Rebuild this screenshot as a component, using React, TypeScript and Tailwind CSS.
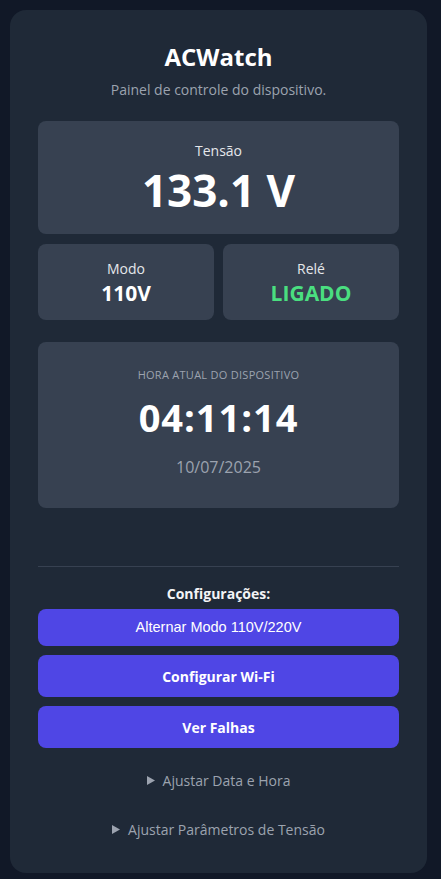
import React from 'react';

const Caret = () => (
  <svg width="8" height="9" viewBox="0 0 8 9" className="shrink-0">
    <path d="M0 0 L8 4.5 L0 9 Z" fill="#9ca3af" />
  </svg>
);

const App = () => {
  return (
    <div className="min-h-screen bg-[#111827] pt-[10px] pb-[6px] pl-[10px]" style={{ fontFamily: '"Open Sans", "Noto Sans", sans-serif' }}>
      <div className="w-[417px] h-[863px] rounded-2xl bg-[#1f2937] px-[28px] pt-[31px] flex flex-col">
        {/* Header */}
        <h1 className="text-center text-[24px] leading-[32px] font-bold text-white">ACWatch</h1>
        <p className="mt-[7px] text-center text-[14px] leading-[20px] text-[#9ca3af]">Painel de controle do dispositivo.</p>

        {/* Tensão */}
        <div className="mt-[21px] h-[113px] rounded-lg bg-[#374151] flex flex-col items-center pt-[20px]">
          <span className="text-[14px] leading-[20px] text-[#e5e7eb]">Tensão</span>
          <span className="mt-[5px] text-[44px] leading-[48px] font-bold text-white">133.1 V</span>
        </div>

        {/* Modo / Relé */}
        <div className="mt-[10px] grid grid-cols-2 gap-[9px]">
          <div className="h-[76px] rounded-lg bg-[#374151] flex flex-col items-center pt-[15px]">
            <span className="text-[14px] leading-[20px] text-[#e5e7eb]">Modo</span>
            <span className="text-[21px] leading-[28px] font-bold text-white">110V</span>
          </div>
          <div className="h-[76px] rounded-lg bg-[#374151] flex flex-col items-center pt-[15px]">
            <span className="text-[14px] leading-[20px] text-[#e5e7eb]">Relé</span>
            <span className="text-[21px] leading-[28px] font-bold text-[#4ade80]">LIGADO</span>
          </div>
        </div>

        {/* Hora */}
        <div className="mt-[22px] h-[166px] rounded-lg bg-[#374151] flex flex-col items-center pt-[25px]">
          <span className="text-[11px] leading-[16px] uppercase tracking-wide text-[#9ca3af]">Hora atual do dispositivo</span>
          <span className="mt-[12px] text-[38px] leading-[44px] font-bold tracking-wide text-white">04:11:14</span>
          <span className="mt-[16px] text-[16px] leading-[24px] text-[#9ca3af]">10/07/2025</span>
        </div>

        <div className="mt-[58px] border-t border-[#374151]" />

        {/* Configurações */}
        <p className="mt-[17px] text-center text-[14px] leading-[20px] font-bold text-[#f3f4f6]">Configurações:</p>
        <div className="mt-[5px] flex flex-col gap-[9px]">
          <button className="h-[37px] rounded-lg bg-[#4f46e5] text-white text-[14.5px]" style={{ fontFamily: '"Liberation Sans", Arial, sans-serif' }}>
            Alternar Modo 110V/220V
          </button>
          <button className="h-[42px] rounded-lg bg-[#4f46e5] text-white text-[14px] font-bold">Configurar Wi-Fi</button>
          <button className="h-[42px] rounded-lg bg-[#4f46e5] text-white text-[14px] font-bold">Ver Falhas</button>
        </div>

        {/* Details */}
        <div className="mt-[22px] flex items-center justify-center gap-[8px] h-[20px] text-[14px] text-[#9ca3af]">
          <Caret />
          <span>Ajustar Data e Hora</span>
        </div>
        <div className="mt-[29px] flex items-center justify-center gap-[8px] h-[20px] text-[14px] text-[#9ca3af]">
          <Caret />
          <span>Ajustar Parâmetros de Tensão</span>
        </div>
      </div>
    </div>
  );
};

export default App;
